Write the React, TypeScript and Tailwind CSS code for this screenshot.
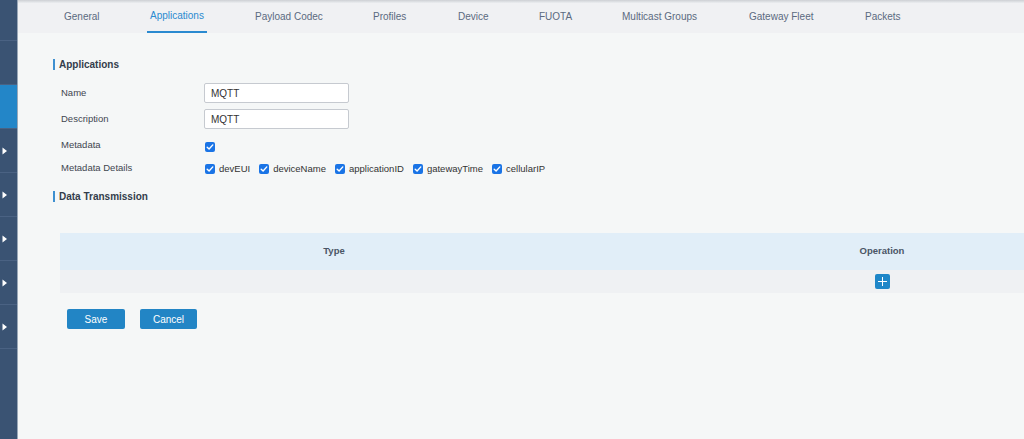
import React from "react";

const tabs = [
  { label: "General", w: "w-[86px]" },
  { label: "Applications", w: "w-[105px]", active: true },
  { label: "Payload Codec", w: "w-[118px]" },
  { label: "Profiles", w: "w-[85px]" },
  { label: "Device", w: "w-[81px]" },
  { label: "FUOTA", w: "w-[83px]" },
  { label: "Multicast Groups", w: "w-[127px]" },
  { label: "Gateway Fleet", w: "w-[116px]" },
  { label: "Packets", w: "w-[80px]" },
];

function Check() {
  return (
    <span className="flex h-[10px] w-[10px] items-center justify-center rounded-[2px] bg-[#1a74e6]">
      <svg width="8" height="8" viewBox="0 0 8 8" fill="none">
        <path d="M1.2 4.2 L3.1 6 L6.8 1.9" stroke="white" strokeWidth="1.4" strokeLinecap="round" strokeLinejoin="round" />
      </svg>
    </span>
  );
}

function SideRow({ h, active, arrow }: { h: string; active?: boolean; arrow?: boolean }) {
  return (
    <div className={`${h} flex items-center border-b border-[#4a6283] ${active ? "bg-[#2386c8]" : ""}`}>
      {arrow && (
        <svg width="6" height="8" viewBox="0 0 6 8" className="ml-[2px]">
          <path d="M0.5 0.5 L5 4 L0.5 7.5 Z" fill="white" />
        </svg>
      )}
    </div>
  );
}

function SectionTitle({ children }: { children: React.ReactNode }) {
  return (
    <div className="flex items-center gap-[4px] pl-[35px]">
      <span className="h-[11px] w-[2px] bg-[#3e90d0]" />
      <span className="text-[10px] font-bold text-[#333d4b]">{children}</span>
    </div>
  );
}

export default function App() {
  const details = ["devEUI", "deviceName", "applicationID", "gatewayTime", "cellularIP"];
  return (
    <div className="flex h-[439px] w-[1024px] overflow-hidden font-['Liberation_Sans',Arial,sans-serif]">
      <aside className="flex w-[18px] shrink-0 flex-col border-r border-[#9aa8b8] bg-[#3a5373]">
        <SideRow h="h-[41px]" />
        <SideRow h="h-[44px]" />
        <SideRow h="h-[44px]" active />
        <SideRow h="h-[44px]" arrow />
        <SideRow h="h-[44px]" arrow />
        <SideRow h="h-[44px]" arrow />
        <SideRow h="h-[44px]" arrow />
        <SideRow h="h-[44px]" arrow />
      </aside>
      <main className="flex min-w-0 flex-1 flex-col overflow-hidden bg-[#f5f7f7]">
        <div className="flex h-[33px] shrink-0 flex-col bg-[#f0f1f3]">
          <div className="h-[3px] bg-gradient-to-b from-[#cdd0d4] to-[#eceef0]" />
          <div className="flex flex-1 items-stretch pl-[43px]">
            {tabs.map((t) => (
              <div key={t.label} className={`${t.w} flex shrink-0 items-stretch`}>
                <span
                  className={`flex items-center px-[3px] pb-[4px] text-[10px] ${
                    t.active ? "border-b-2 border-[#2a8ad0] pb-[2px] text-[#2a8ad0]" : "text-[#5b6a80]"
                  }`}
                >
                  {t.label}
                </span>
              </div>
            ))}
          </div>
        </div>

        <div className="pt-[24px]">
          <SectionTitle>Applications</SectionTitle>
        </div>

        <div className="mt-[11px] flex flex-col pl-[43px] text-[9.5px] text-[#3f4650]">
          <div className="flex h-[20px] items-center">
            <span className="w-[143px]">Name</span>
            <div className="flex h-[20px] w-[145px] items-center rounded-[2px] border border-[#c6cad0] bg-white px-[6px] text-[10px] text-[#333]">
              MQTT
            </div>
          </div>
          <div className="mt-[6px] flex h-[20px] items-center">
            <span className="w-[143px]">Description</span>
            <div className="flex h-[20px] w-[145px] items-center rounded-[2px] border border-[#c6cad0] bg-white px-[6px] text-[10px] text-[#333]">
              MQTT
            </div>
          </div>
          <div className="mt-[7px] flex h-[22px] items-center">
            <span className="w-[144px] -translate-y-[2px]">Metadata</span>
            <Check />
          </div>
          <div className="flex h-[22px] items-center">
            <span className="w-[144px] -translate-y-[1px]">Metadata Details</span>
            <div className="flex items-center">
              {details.map((d) => (
                <div key={d} className="mr-[9px] flex items-center gap-[4px]">
                  <Check />
                  <span className="text-[9.5px] text-[#333]">{d}</span>
                </div>
              ))}
            </div>
          </div>
        </div>

        <div className="mt-[9px]">
          <SectionTitle>Data Transmission</SectionTitle>
        </div>

        <div className="mt-[29px] ml-[42px] w-[1096px] shrink-0">
          <div className="grid h-[37px] grid-cols-2 items-center bg-[#e1eef8] text-[9.5px] font-bold text-[#4a5566]">
            <span className="text-center">Type</span>
            <span className="text-center">Operation</span>
          </div>
          <div className="grid h-[23px] grid-cols-2 items-center bg-[#eff1f3]">
            <span />
            <div className="flex justify-center">
              <span className="flex h-[15px] w-[15px] items-center justify-center rounded-[2px] bg-[#1f87c8]">
                <svg width="11" height="11" viewBox="0 0 11 11">
                  <path d="M5.5 1 V10 M1 5.5 H10" stroke="white" strokeWidth="1" />
                </svg>
              </span>
            </div>
          </div>
        </div>

        <div className="mt-[16px] flex gap-[15px] pl-[49px]">
          <button className="h-[20px] w-[58px] rounded-[2px] bg-[#2285c5] text-[10px] text-white">Save</button>
          <button className="h-[20px] w-[57px] rounded-[2px] bg-[#2285c5] text-[10px] text-white">Cancel</button>
        </div>
      </main>
    </div>
  );
}
